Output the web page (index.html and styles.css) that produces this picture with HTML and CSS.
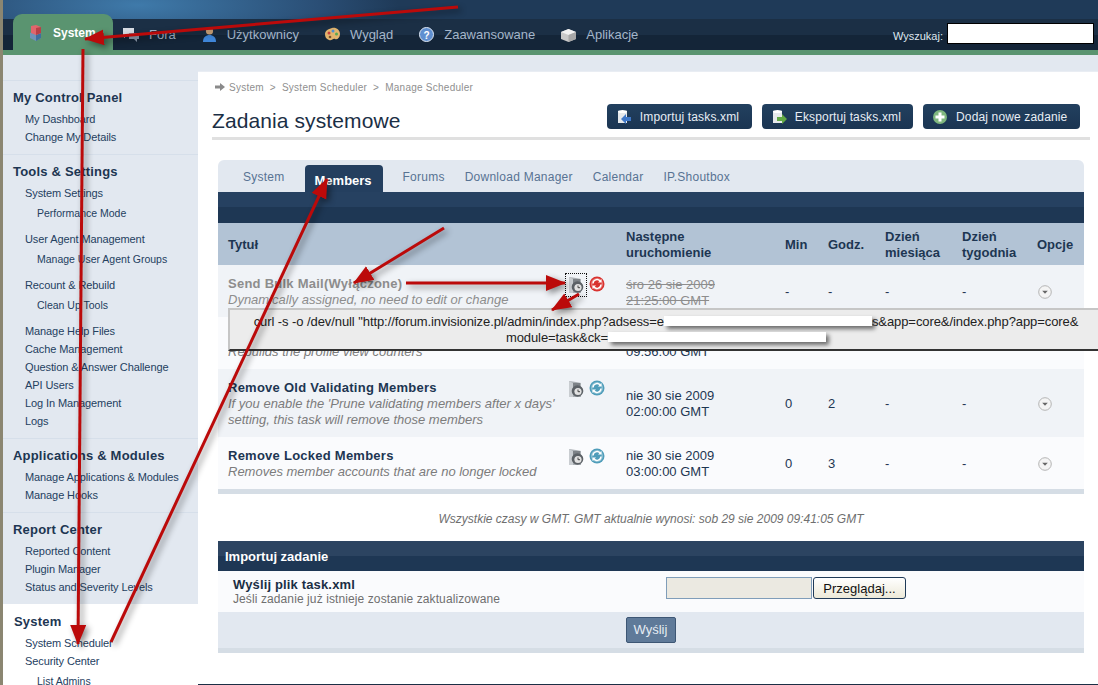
FILE: index.html
```html
<!DOCTYPE html>
<html lang="pl">
<head>
    <meta charset="UTF-8">
    <meta name="viewport" content="width=device-width, initial-scale=1.0">
    <title>Zadania systemowe</title>
    <link rel="stylesheet" href="styles.css">
</head>
<body>
    <svg class="defs" width="0" height="0">
        <defs>
            <symbol id="ico-clock" viewBox="0 0 16 18">
                <path d="M1 1l7 1 5 1v14H1z" fill="#a9aeb3"/>
                <path d="M1 1l4 2v14H1z" fill="#c9cdd1"/>
                <path d="M5 3h7v5H5z" fill="#7d8287"/>
                <circle cx="9.500" cy="11" r="5.800" fill="#5c6166"/>
                <circle cx="10" cy="11.500" r="3.600" fill="#e2e2e2"/>
                <path d="M10 9.500v2.200h2" fill="none" stroke="#444" stroke-width="1"/>
            </symbol>
            <symbol id="ico-refresh" viewBox="0 0 16 16">
                <circle cx="8" cy="8" r="7.500" fill="currentColor"/>
                <circle cx="8" cy="8" r="6" fill="#fff" fill-opacity=".35"/>
                <circle cx="8" cy="8" r="4.600" fill="currentColor"/>
                <path d="M4 7.500a4 4 0 0 1 7-2.500M12 8.500a4 4 0 0 1-7 2.500" fill="none" stroke="#fff" stroke-width="1.500"/>
                <path d="M12.500 3v3.500H9zM3.500 13V9.500H7z" fill="#fff"/>
            </symbol>
            <symbol id="ico-opt" viewBox="0 0 14 14">
                <circle cx="7" cy="7" r="6.300" fill="#f4f4f4" stroke="#b5b5b5"/>
                <path d="M4.200 5.800h5.600L7 8.800z" fill="#666"/>
            </symbol>
            <marker id="head" markerUnits="userSpaceOnUse" markerWidth="22" markerHeight="18" refX="19" refY="8" orient="auto">
                <path d="M0 0L20 8L0 16z" fill="#bb0a0a"/>
            </marker>
        </defs>
    </svg>

    <div class="page">
        <header class="top">
            <div class="top-strip"></div>
            <div class="navbar">
                <nav class="nav">
                    <a class="nav-item active">
                        <svg width="17" height="17" viewBox="0 0 17 17"><path d="M3 9l5-2 6 2v5l-5 3-6-3z" fill="#6f93b8"/><path d="M9 11v6l5-3V9z" fill="#3f6f9f"/><path d="M4 2l5-1 5 2v6l-5 2-5-2z" fill="#e0666c"/><path d="M9 4v7l5-2V3z" fill="#b83f46"/></svg>
                        System
                    </a>
                    <a class="nav-item">
                        <svg width="18" height="17" viewBox="0 0 18 17"><path d="M1 2h11v7H5l-3 3V9H1z" fill="#d6dbe2"/><path d="M7 7h10v6h-2v3l-3-3H7z" fill="#8d9bae"/></svg>
                        Fora
                    </a>
                    <a class="nav-item">
                        <svg width="17" height="17" viewBox="0 0 17 17"><circle cx="8.500" cy="5" r="3.600" fill="#dcae80"/><path d="M5 3.500a3.600 3 0 0 1 7 0z" fill="#6d4526"/><path d="M2 16c0-5 3-7 6.500-7s6.500 2 6.500 7z" fill="#3f86d8"/></svg>
                        Użytkownicy
                    </a>
                    <a class="nav-item">
                        <svg width="17" height="17" viewBox="0 0 17 17"><path d="M8 2c4-1 8 2 8 6s-3 6-5 5-3 2-6 1-4-3-4-6 3-5 7-6z" fill="#e2b46d"/><circle cx="5" cy="7" r="1.500" fill="#c8403d"/><circle cx="9" cy="5" r="1.500" fill="#4d8fd0"/><circle cx="12.500" cy="8" r="1.500" fill="#5aa851"/><circle cx="6" cy="11" r="1.300" fill="#77512c"/></svg>
                        Wygląd
                    </a>
                    <a class="nav-item">
                        <svg width="17" height="17" viewBox="0 0 17 17"><circle cx="8.500" cy="8.500" r="7" fill="#5f8fd0" stroke="#dfe8f4"/><text class="q-mark" x="8.500" y="12.500" text-anchor="middle">?</text></svg>
                        Zaawansowane
                    </a>
                    <a class="nav-item">
                        <svg width="17" height="17" viewBox="0 0 17 17"><path d="M1 6l7.500-3L16 6v7l-7.500 3L1 13z" fill="#c9c9c9"/><path d="M1 6l7.500 3L16 6 8.500 3z" fill="#f1f1f1"/><path d="M8.500 9v7L16 13V6z" fill="#a7a7a7"/></svg>
                        Aplikacje
                    </a>
                </nav>
                <form class="search">
                    <label>Wyszukaj:</label>
                    <input type="text">
                </form>
            </div>
            <div class="green-line"></div>
        </header>

        <div class="body-wrap">
            <aside class="sidebar">
                <section class="side-group">
                    <h3>My Control Panel</h3>
                    <ul>
                        <li>My Dashboard</li>
                        <li>Change My Details</li>
                    </ul>
                </section>
                <section class="side-group">
                    <h3>Tools &amp; Settings</h3>
                    <ul>
                        <li>System Settings</li>
                        <li class="sub">Performance Mode</li>
                        <li>User Agent Management</li>
                        <li class="sub">Manage User Agent Groups</li>
                        <li>Recount &amp; Rebuild</li>
                        <li class="sub">Clean Up Tools</li>
                        <li>Manage Help Files</li>
                        <li>Cache Management</li>
                        <li>Question &amp; Answer Challenge</li>
                        <li>API Users</li>
                        <li>Log In Management</li>
                        <li>Logs</li>
                    </ul>
                </section>
                <section class="side-group">
                    <h3>Applications &amp; Modules</h3>
                    <ul>
                        <li>Manage Applications &amp; Modules</li>
                        <li>Manage Hooks</li>
                    </ul>
                </section>
                <section class="side-group">
                    <h3>Report Center</h3>
                    <ul>
                        <li>Reported Content</li>
                        <li>Plugin Manager</li>
                        <li>Status and Severity Levels</li>
                    </ul>
                </section>
                <section class="side-group current">
                    <h3>System</h3>
                    <ul>
                        <li>System Scheduler</li>
                        <li>Security Center</li>
                        <li class="sub">List Admins</li>
                    </ul>
                </section>
            </aside>

            <main class="content">
                <div class="crumbs">
                    <svg width="10" height="8" viewBox="0 0 10 8"><path d="M0 2.500h5V0l5 4-5 4V5.500H0z" fill="#8a8a8a"/></svg>
                    <span>System</span><span>&gt;</span><span>System Scheduler</span><span>&gt;</span><span>Manage Scheduler</span>
                </div>
                <div class="title-row">
                    <h1>Zadania systemowe</h1>
                    <div class="actions">
                        <a class="btn">
                            <svg width="16" height="16" viewBox="0 0 16 16"><path d="M2 2h9v12H2z" fill="#e6e9ec"/><ellipse cx="6.500" cy="2.500" rx="4.500" ry="1.500" fill="#fff"/><path d="M15 8v4h-5v3L5 10l5-5v3z" fill="#3f78c8"/></svg>
                            Importuj tasks.xml
                        </a>
                        <a class="btn">
                            <svg width="16" height="16" viewBox="0 0 16 16"><path d="M2 2h9v12H2z" fill="#e6e9ec"/><ellipse cx="6.500" cy="2.500" rx="4.500" ry="1.500" fill="#fff"/><path d="M6 8v4h5v3l5-5-5-5v3z" fill="#62a845"/></svg>
                            Eksportuj tasks.xml
                        </a>
                        <a class="btn">
                            <svg width="16" height="16" viewBox="0 0 16 16"><circle cx="8" cy="8" r="7" fill="#7fb77e"/><path d="M6.500 3.500h3v3h3v3h-3v3h-3v-3h-3v-3h3z" fill="#fff"/></svg>
                            Dodaj nowe zadanie
                        </a>
                    </div>
                </div>

                <div class="box">
                    <div class="tabs">
                        <a class="tab">System</a>
                        <a class="tab active">Members</a>
                        <a class="tab">Forums</a>
                        <a class="tab">Download Manager</a>
                        <a class="tab">Calendar</a>
                        <a class="tab">IP.Shoutbox</a>
                    </div>
                    <div class="dark-bar"></div>
                    <table class="tasks">
                        <thead>
                            <tr>
                                <th class="c-title">Tytuł</th>
                                <th class="c-next">Następne uruchomienie</th>
                                <th class="c-min">Min</th>
                                <th class="c-hour">Godz.</th>
                                <th class="c-day">Dzień miesiąca</th>
                                <th class="c-week">Dzień tygodnia</th>
                                <th class="c-opt">Opcje</th>
                            </tr>
                        </thead>
                        <tbody>
                            <tr class="row-a off">
                                <td>
                                    <div class="task">
                                        <div class="task-text"><strong>Send Bulk Mail(Wyłączone)</strong><em>Dynamically assigned, no need to edit or change</em></div>
                                        <div class="task-icons">
                                            <span class="focus-box"><svg width="16" height="18"><use href="#ico-clock"/></svg></span>
                                            <svg class="ico-red" width="16" height="16"><use href="#ico-refresh"/></svg>
                                        </div>
                                    </div>
                                </td>
                                <td class="next"><s>śro 26 sie 2009<br>21:25:00 GMT</s></td>
                                <td>-</td><td>-</td><td>-</td><td>-</td>
                                <td><svg class="opt" width="14" height="14"><use href="#ico-opt"/></svg></td>
                            </tr>
                            <tr class="row-b">
                                <td>
                                    <div class="task">
                                        <div class="task-text"><strong>Rebuild Profile Views</strong><em>Rebuilds the profile view counters</em></div>
                                    </div>
                                </td>
                                <td class="next">nie 30 sie 2009<br>09:56:00 GMT</td>
                                <td>-</td><td>-</td><td>-</td><td>-</td>
                                <td></td>
                            </tr>
                            <tr class="row-a tall">
                                <td>
                                    <div class="task">
                                        <div class="task-text"><strong>Remove Old Validating Members</strong><em>If you enable the 'Prune validating members after x days' setting, this task will remove those members</em></div>
                                        <div class="task-icons">
                                            <svg width="16" height="18"><use href="#ico-clock"/></svg>
                                            <svg class="ico-blue" width="16" height="16"><use href="#ico-refresh"/></svg>
                                        </div>
                                    </div>
                                </td>
                                <td class="next">nie 30 sie 2009<br>02:00:00 GMT</td>
                                <td>0</td><td>2</td><td>-</td><td>-</td>
                                <td><svg class="opt" width="14" height="14"><use href="#ico-opt"/></svg></td>
                            </tr>
                            <tr class="row-b">
                                <td>
                                    <div class="task">
                                        <div class="task-text"><strong>Remove Locked Members</strong><em>Removes member accounts that are no longer locked</em></div>
                                        <div class="task-icons">
                                            <svg width="16" height="18"><use href="#ico-clock"/></svg>
                                            <svg class="ico-blue" width="16" height="16"><use href="#ico-refresh"/></svg>
                                        </div>
                                    </div>
                                </td>
                                <td class="next">nie 30 sie 2009<br>03:00:00 GMT</td>
                                <td>0</td><td>3</td><td>-</td><td>-</td>
                                <td><svg class="opt" width="14" height="14"><use href="#ico-opt"/></svg></td>
                            </tr>
                        </tbody>
                    </table>
                    <div class="box-foot"></div>
                </div>

                <p class="time-note">Wszystkie czasy w GMT. GMT aktualnie wynosi: sob 29 sie 2009 09:41:05 GMT</p>

                <form class="box import">
                    <h2>Importuj zadanie</h2>
                    <div class="import-row">
                        <div class="import-label">
                            <strong>Wyślij plik task.xml</strong>
                            <span>Jeśli zadanie już istnieje zostanie zaktualizowane</span>
                        </div>
                        <div class="file-field">
                            <span class="file-name"></span>
                            <span class="file-btn">Przeglądaj...</span>
                        </div>
                    </div>
                    <div class="submit-row"><span class="submit">Wyślij</span></div>
                    <div class="box-foot"></div>
                </form>
            </main>
        </div>

        <div class="tooltip">
            curl -s -o /dev/null "http://forum.invisionize.pl/admin/index.php?adsess=e<span class="mask mask-a"></span>s&amp;app=core&amp;/index.php?app=core&amp;<br>module=task&amp;ck=<span class="mask mask-b"></span>
        </div>

        <!-- red arrows drawn over the screenshot -->
        <svg class="arrows" width="1098" height="685" viewBox="0 0 1098 685">
            <g stroke="#bb0a0a" stroke-width="3" fill="none" marker-end="url(#head)">
                <line x1="458" y1="7" x2="85" y2="39"/>
                <line x1="83" y1="49" x2="78" y2="644"/>
                <line x1="111" y1="642" x2="327" y2="179"/>
                <line x1="444" y1="228" x2="354" y2="283"/>
                <line x1="406" y1="283" x2="565" y2="283"/>
                <line x1="579" y1="294" x2="552" y2="310"/>
            </g>
        </svg>
    </div>
</body>
</html>
```

FILE: styles.css
```css
* {
    box-sizing: border-box;
}

html, body {
    margin: 0;
    height: 685px;
    overflow: hidden;
    background: #fff;
}

body {
    font-family: "Liberation Sans", Arial, sans-serif;
    font-size: 13px;
    color: #1d3652;
}

.defs {
    display: block;
    height: 0;
}

.page {
    position: relative;
    height: 685px;
    overflow: hidden;
    border-left: 3px solid #8b8671;
}

/* header */
.top-strip {
    height: 19px;
    background: radial-gradient(ellipse 260px 60px at 135px 5px, #3f7aaa, #2a4e75 70%, #1f3a58 100%), #1f3a58;
    background-repeat: no-repeat;
}

.navbar {
    height: 31px;
    display: flex;
    justify-content: space-between;
    background: linear-gradient(#1b2f45 0, #1b2f45 50%, #142538 50%, #142538 100%);
}

.nav {
    display: flex;
    align-items: flex-start;
    padding-left: 10px;
}

.nav-item {
    display: flex;
    align-items: center;
    gap: 9px;
    height: 31px;
    margin-right: 25px;
    color: #a4b6ca;
}

.nav-item.active {
    height: 36px;
    width: 100px;
    margin-top: -5px;
    margin-right: 9px;
    padding: 1px 0 0 14px;
    border-radius: 9px 9px 0 0;
    background: #5a9470;
    color: #fff;
    font-weight: bold;
    font-size: 12px;
}

.q-mark {
    font-size: 10px;
    font-weight: bold;
    fill: #fff;
}

.search {
    display: flex;
    align-items: center;
    gap: 4px;
    padding-right: 4px;
    color: #dfe7f0;
    font-size: 11px;
}

.search label {
    padding-top: 3px;
}

.search input {
    width: 147px;
    height: 21px;
    margin: 0 0 2px;
    padding: 0;
    border: 1px solid #000;
    background: #fff;
}

.green-line {
    height: 5px;
    background: #5a9470;
}

.body-wrap {
    display: flex;
    height: 630px;
    background: #e2e8f0;
}

/* sidebar */
.sidebar {
    width: 195px;
    padding-top: 25px;
    flex: none;
    height: 630px;
    overflow: hidden;
}

.side-group {
    padding: 7px 0 8px 10px;
    border-top: 1px solid #d6dfea;
}

.side-group h3 {
    margin: 0 0 2px;
    font-size: 13px;
    line-height: 20px;
    letter-spacing: .2px;
    color: #1d3652;
}

.side-group ul {
    margin: 0;
    padding: 0;
    list-style: none;
}

.side-group li {
    padding-left: 12px;
    font-size: 11px;
    line-height: 18px;
    letter-spacing: -.1px;
    color: #24405f;
}

.side-group li.sub {
    padding-left: 24px;
    margin: 2px 0 8px;
    font-size: 10.500px;
    letter-spacing: 0;
}

.side-group.current {
    border-top: 0;
    background: #fff;
    padding: 8px 0 0 11px;
    height: 100px;
}

.side-group.current li {
    padding-left: 11px;
}

.side-group.current li.sub {
    padding-left: 23px;
}

/* main column */
.content {
    flex: 1;
    margin-top: 16px;
    padding: 8px 8px 0 14px;
    background: #fff;
    border-bottom: 1px solid #1b2f45;
    border-top: 1px solid #e9edf3;
}

.crumbs {
    display: flex;
    align-items: center;
    gap: 6px;
    height: 14px;
    margin-left: 3px;
    color: #8f8f8f;
    font-size: 10px;
    letter-spacing: .25px;
}

.crumbs svg {
    margin-right: -2px;
}

.title-row {
    display: flex;
    justify-content: space-between;
    align-items: flex-start;
    height: 46px;
    padding: 10px 10px 0 0;
    border-bottom: 3px solid #e0e0e0;
}

.title-row h1 {
    margin: 5px 0 0;
    font-size: 21px;
    line-height: 24px;
    letter-spacing: .1px;
    font-weight: normal;
    color: #1b2f45;
}

.actions {
    display: flex;
    gap: 10px;
}

.btn {
    display: flex;
    align-items: center;
    gap: 8px;
    height: 25px;
    padding: 0 12px 0 9px;
    border-radius: 4px;
    background: linear-gradient(#22405f, #1b3552);
    color: #e8eef5;
    font-size: 12px;
    letter-spacing: .15px;
}

.btn:first-child {
    min-width: 145px;
}

.btn:last-child {
    min-width: 157px;
}

.box {
    margin: 20px 6px 0;
}

.tabs {
    display: flex;
    align-items: flex-end;
    height: 32px;
    padding-left: 15px;
    border-radius: 6px 6px 0 0;
    background: #e2e8f0;
}

.tab {
    padding: 0 10px 7px;
    line-height: 16px;
    color: #587393;
    font-size: 12px;
    letter-spacing: .25px;
}

.tab.active {
    height: 27px;
    min-width: 78px;
    margin: 0 10px;
    padding-top: 8px;
    padding-bottom: 0;
    border-radius: 4px 4px 0 0;
    background: #243f5f;
    color: #fff;
    font-size: 13px;
    letter-spacing: 0;
    font-weight: bold;
}

.dark-bar {
    height: 31px;
    background: linear-gradient(#264161 0, #264161 50%, #1e3754 50%, #1e3754 100%);
}

.tasks {
    width: 100%;
    border-collapse: collapse;
    table-layout: fixed;
}

.tasks th {
    height: 42px;
    padding: 1px 10px 0;
    background: #b2c3d5;
    color: #1d3652;
    font-size: 13px;
    line-height: 16px;
    text-align: left;
}

.c-title { width: 398px; }
.c-next { width: 159px; }
.c-min { width: 43px; }
.c-hour { width: 57px; }
.c-day { width: 77px; }
.c-week { width: 75px; }
.c-opt { width: 57px; }

.tasks td {
    height: 52px;
    padding: 2px 10px 0;
    font-size: 13px;
    line-height: 16px;
    color: #1d3652;
    vertical-align: middle;
}

.tasks .tall td {
    height: 68px;
}

.tasks .off .next {
    padding-top: 4px;
}

.row-a {
    background: #f0f3f7;
}

.row-b {
    background: #fafbfd;
}

.task {
    display: flex;
    justify-content: space-between;
    gap: 10px;
}

.task-text strong {
    display: block;
    font-size: 13px;
    letter-spacing: .25px;
}

.task-text em {
    display: block;
    color: #7c7c7c;
    font-size: 13px;
}

.task-icons {
    display: flex;
    align-items: flex-start;
    gap: 5px;
    flex: none;
    padding-right: 1px;
}

.focus-box {
    display: block;
    outline: 1px dotted #111;
    outline-offset: 2px;
    height: 18px;
}

.ico-red { color: #d9322f; }
.ico-blue { color: #4f9dba; }

.off strong, .off em, .off .next, .off s {
    color: #8d8d8d;
}

.opt {
    display: block;
    margin-left: 1px;
}

.box-foot {
    height: 5px;
    background: #d5dde5;
}

.time-note {
    margin: 17px 0 14px;
    text-align: center;
    font-size: 12px;
    line-height: 16px;
    font-style: italic;
    color: #6f6f6f;
}

.import {
    margin-top: 0;
}

.import h2 {
    margin: 0;
    height: 30px;
    padding-left: 7px;
    font-size: 13px;
    line-height: 32px;
    color: #fff;
    background: linear-gradient(#2c4461 0, #2c4461 50%, #1e3754 50%, #1e3754 100%);
}

.import-row {
    display: flex;
    height: 41px;
    background: #fafbfd;
}

.import-label {
    width: 448px;
    padding: 6px 0 0 15px;
}

.import-label strong {
    display: block;
    font-size: 13px;
    line-height: 15px;
    letter-spacing: .15px;
    color: #1b2f45;
}

.import-label span {
    display: block;
    font-size: 12px;
    line-height: 14px;
    letter-spacing: .1px;
    color: #6f6f6f;
}

.file-field {
    display: flex;
    gap: 1px;
    padding-top: 6px;
}

.file-name {
    width: 146px;
    height: 22px;
    background: #ebe9e1;
    border: 1px solid #7f9db9;
}

.file-btn {
    width: 93px;
    height: 22px;
    text-align: center;
    line-height: 22px;
    font-size: 13px;
    color: #111;
    background: linear-gradient(#fff, #ece9d8);
    border: 1px solid #1f3a58;
    border-radius: 3px;
}

.submit-row {
    display: flex;
    justify-content: center;
    align-items: center;
    height: 36px;
    background: #e2e8f0;
}

.submit {
    width: 50px;
    height: 26px;
    margin-left: -1px;
    text-align: center;
    line-height: 24px;
    color: #e6ecf3;
    font-size: 13px;
    background: #5f7a99;
    border: 1px solid #3d5674;
    border-radius: 2px;
}

/* overlays */
.tooltip {
    position: absolute;
    left: 225px;
    top: 308px;
    width: 876px;
    height: 43px;
    padding-top: 4px;
    text-align: center;
    font-size: 13px;
    line-height: 16px;
    letter-spacing: -.08px;
    color: #222;
    background: #ececec;
    border: 2px solid #c6c6c6;
    border-bottom-color: #333;
}

.mask {
    display: inline-block;
    height: 10px;
    background: #fff;
    box-shadow: 3px 3px 4px rgba(0, 0, 0, .55);
}

.mask-a { width: 208px; }
.mask-b { width: 218px; }

.arrows {
    position: absolute;
    left: -3px;
    top: 0;
    pointer-events: none;
    filter: drop-shadow(3px 3px 3px rgba(0, 0, 0, .45));
}
```
